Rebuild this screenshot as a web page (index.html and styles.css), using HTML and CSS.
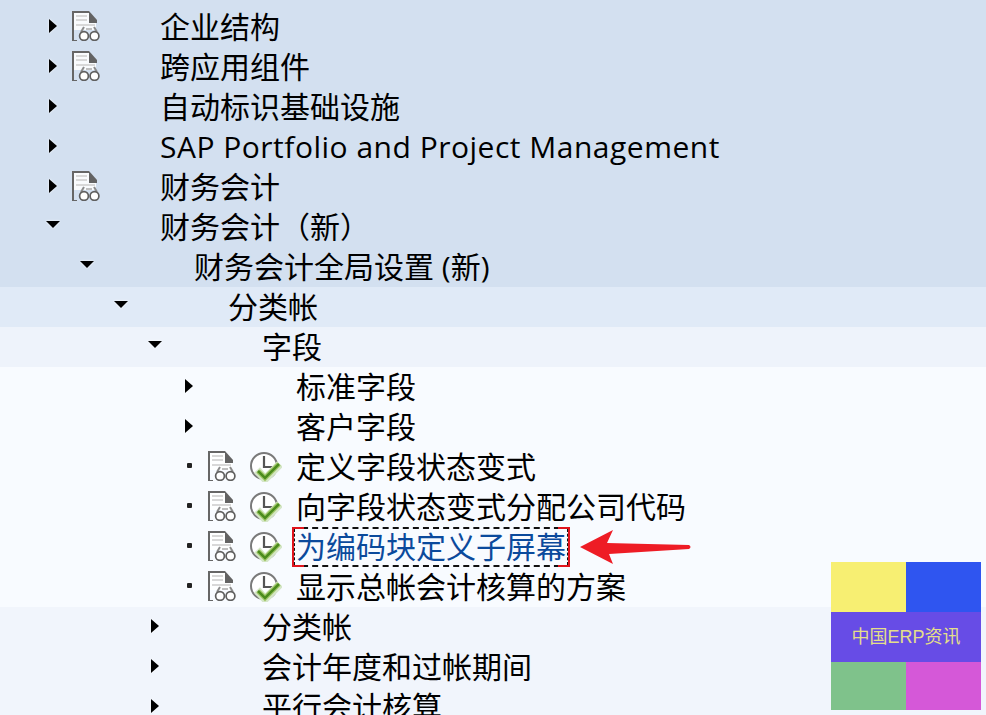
FILE: index.html
```html
<!DOCTYPE html>
<html lang="zh-CN">
<head>
    <meta charset="UTF-8">
    <meta name="viewport" content="width=device-width, initial-scale=1.0">
    <title>SAP IMG</title>
    <link rel="stylesheet" href="styles.css">
</head>
<body>

<svg class="defs" width="0" height="0">
    <symbol id="doc" viewBox="0 0 28 30">
        <path d="M2 1H17V11H24V19H2Z" fill="#fff" opacity=".85"/>
        <path d="M1 30V1H17" fill="none" stroke="#666" stroke-width="2"/>
        <path d="M2 30H5" stroke="#666" stroke-width="2"/>
        <path d="M17 0L25 9V12H17Z" fill="#636363"/>
        <path d="M4 5H15M4 9H15M4 14H23" stroke="#d8d8d8" stroke-width="2"/>
        <path d="M9 21L12 16M25 21L22 16" stroke="#8c8c8c" stroke-width="2"/>
        <path d="M14 18H20" stroke="#c0c0c0" stroke-width="2"/>
        <circle cx="12" cy="25" r="4.400" fill="#fff" stroke="#5f5f5f" stroke-width="1.700"/>
        <circle cx="22.500" cy="25" r="4.400" fill="#fff" stroke="#5f5f5f" stroke-width="1.700"/>
    </symbol>
    <symbol id="clock" viewBox="0 0 32 30">
        <circle cx="14" cy="14" r="13" fill="#fff" stroke="#7a7a7a" stroke-width="2"/>
        <path d="M14 4V15H24" fill="none" stroke="#555" stroke-width="2.200"/>
        <path d="M7 18L15 27L30 12" fill="none" stroke="#d5e6c8" stroke-width="8"/>
        <path d="M8 19L15 26L29 12" fill="none" stroke="#a3c96b" stroke-width="5"/>
        <path d="M8 19L15 26L29 12" fill="none" stroke="#4c8c1e" stroke-width="2.500"/>
    </symbol>
</svg>

<div class="tree">
    <div class="row band1 l0"><span class="twist closed"></span><span class="slot"><svg class="doc"><use href="#doc"/></svg></span><span class="slot2"></span><span class="label">企业结构</span></div>
    <div class="row band1 l0"><span class="twist closed"></span><span class="slot"><svg class="doc"><use href="#doc"/></svg></span><span class="slot2"></span><span class="label">跨应用组件</span></div>
    <div class="row band1 l0"><span class="twist closed"></span><span class="slot"></span><span class="slot2"></span><span class="label">自动标识基础设施</span></div>
    <div class="row band1 l0"><span class="twist closed"></span><span class="slot"></span><span class="slot2"></span><span class="label latin">SAP Portfolio and Project Management</span></div>
    <div class="row band1 l0"><span class="twist closed"></span><span class="slot"><svg class="doc"><use href="#doc"/></svg></span><span class="slot2"></span><span class="label">财务会计</span></div>
    <div class="row band1 l0"><span class="twist open"></span><span class="slot"></span><span class="slot2"></span><span class="label">财务会计（新）</span></div>
    <div class="row band1 l1"><span class="twist open"></span><span class="slot"></span><span class="slot2"></span><span class="label">财务会计全局设置 (新)</span></div>
    <div class="row band2 l2"><span class="twist open"></span><span class="slot"></span><span class="slot2"></span><span class="label">分类帐</span></div>
    <div class="row band3 l3"><span class="twist open"></span><span class="slot"></span><span class="slot2"></span><span class="label">字段</span></div>
    <div class="row band4 l4"><span class="twist closed"></span><span class="slot"></span><span class="slot2"></span><span class="label">标准字段</span></div>
    <div class="row band4 l4"><span class="twist closed"></span><span class="slot"></span><span class="slot2"></span><span class="label">客户字段</span></div>
    <div class="row band4 l4"><span class="twist leaf"></span><span class="slot"><svg class="doc"><use href="#doc"/></svg></span><span class="slot2"><svg class="clock"><use href="#clock"/></svg></span><span class="label">定义字段状态变式</span></div>
    <div class="row band4 l4"><span class="twist leaf"></span><span class="slot"><svg class="doc"><use href="#doc"/></svg></span><span class="slot2"><svg class="clock"><use href="#clock"/></svg></span><span class="label">向字段状态变式分配公司代码</span></div>
    <div class="row band4 l4">
        <span class="twist leaf"></span><span class="slot"><svg class="doc"><use href="#doc"/></svg></span><span class="slot2"><svg class="clock"><use href="#clock"/></svg></span>
        <span class="label selected">为编码块定义子屏幕</span>
        <svg class="pointer" width="112" height="34" viewBox="0 0 112 34"><path d="M0 17L33 0L27 13L109 15Q112 17 109 19L29 24L33 34Z" fill="#ee1c25"/></svg>
    </div>
    <div class="row band4 l4"><span class="twist leaf"></span><span class="slot"><svg class="doc"><use href="#doc"/></svg></span><span class="slot2"><svg class="clock"><use href="#clock"/></svg></span><span class="label">显示总帐会计核算的方案</span></div>
    <div class="row band5 l3"><span class="twist closed"></span><span class="slot"></span><span class="slot2"></span><span class="label">分类帐</span></div>
    <div class="row band5 l3"><span class="twist closed"></span><span class="slot"></span><span class="slot2"></span><span class="label">会计年度和过帐期间</span></div>
    <div class="row band5 l3"><span class="twist closed"></span><span class="slot"></span><span class="slot2"></span><span class="label">平行会计核算</span></div>
</div>

<div class="logo">
    <div class="logo-row"><span class="yellow"></span><span class="blue"></span></div>
    <div class="logo-name">中国ERP资讯</div>
    <div class="logo-row last"><span class="green"></span><span class="pink"></span></div>
</div>

</body>
</html>
```

FILE: styles.css
```css
* {
    margin: 0;
    padding: 0;
    box-sizing: border-box;
}
html, body {
    height: 715px;
    overflow: hidden;
}
body {
    position: relative;
    background: #d3e0f0;
    font-family: "Open Sans", "Noto Sans CJK SC", sans-serif;
    font-size: 30px;
    color: #000;
}
.defs {
    position: absolute;
}
.tree {
    padding-top: 7px;
}
.row {
    display: flex;
    align-items: center;
    height: 40px;
    white-space: nowrap;
}
.band1 { background: #d3e0f0; }
.band2 { background: #e0eaf7; }
.band3 { background: #eef3fb; }
.band4 { background: #f8fbff; }
.band5 { background: #f1f5fc; }

.l0 { padding-left: 40px; }
.l1 { padding-left: 74px; }
.l2 { padding-left: 108px; }
.l3 { padding-left: 142px; }
.l4 { padding-left: 176px; }

.twist {
    flex: none;
    width: 32px;
    height: 40px;
    padding-right: 6px;
    display: flex;
    align-items: center;
    justify-content: center;
}
.twist::before {
    content: "";
    display: block;
    filter: drop-shadow(0 0 1px #fff);
}
.closed::before {
    margin: -2px 1px 0 0;
    border-left: 8px solid #000;
    border-top: 7px solid transparent;
    border-bottom: 7px solid transparent;
}
.open::before {
    margin-top: -6px;
    border-top: 7px solid #000;
    border-left: 7px solid transparent;
    border-right: 7px solid transparent;
}
.leaf::before {
    margin: -3px 0 0 1px;
    width: 5px;
    height: 5px;
    border-radius: 1px;
    background: #222;
}
.slot {
    flex: none;
    width: 42px;
    height: 30px;
}
.slot2 {
    flex: none;
    width: 46px;
    height: 30px;
}
.doc {
    display: block;
    width: 28px;
    height: 30px;
    margin-top: -1px;
}
.clock {
    display: block;
    width: 32px;
    height: 30px;
}
.label {
    line-height: 40px;
}
.latin {
    letter-spacing: 0.5px;
}
.selected {
    position: relative;
    margin-left: -4px;
    padding: 0 2px;
    height: 40px;
    line-height: 36px;
    color: #0b4a9c;
    border: 2px dashed #111;
    border-left-color: transparent;
    border-right-color: transparent;
}
/* red marker drawn on the screenshot, open along top and bottom */
.selected::before {
    content: "";
    position: absolute;
    inset: -2px;
    border-left: 2px solid #e0141c;
    border-right: 2px solid #e0141c;
    background:
        linear-gradient(#e0141c, #e0141c) 0 0 / 10px 2px no-repeat,
        linear-gradient(#e0141c, #e0141c) 100% 0 / 10px 2px no-repeat,
        linear-gradient(#e0141c, #e0141c) 0 100% / 10px 2px no-repeat,
        linear-gradient(#e0141c, #e0141c) 100% 100% / 10px 2px no-repeat;
}
.selected::after {
    content: "";
    position: absolute;
    inset: 0;
    border-left: 1px dashed #111;
    border-right: 1px dashed #111;
}
.pointer {
    flex: none;
    margin-left: 10px;
}
.logo {
    position: absolute;
    left: 831px;
    top: 562px;
    width: 150px;
    height: 148px;
}
.logo-row {
    display: flex;
    height: 50px;
}
.logo-row.last {
    height: 48px;
}
.logo-row span {
    flex: 1;
}
.yellow { background: #f7ef72; }
.blue { background: #2f55f0; }
.green { background: #7fc28b; }
.pink { background: #d558d8; }
.logo-name {
    height: 50px;
    line-height: 51px;
    text-align: center;
    background: #674ce6;
    color: #e4df8a;
    font-family: "Liberation Sans", "Noto Sans CJK SC", sans-serif;
    font-size: 18px;
}
```
